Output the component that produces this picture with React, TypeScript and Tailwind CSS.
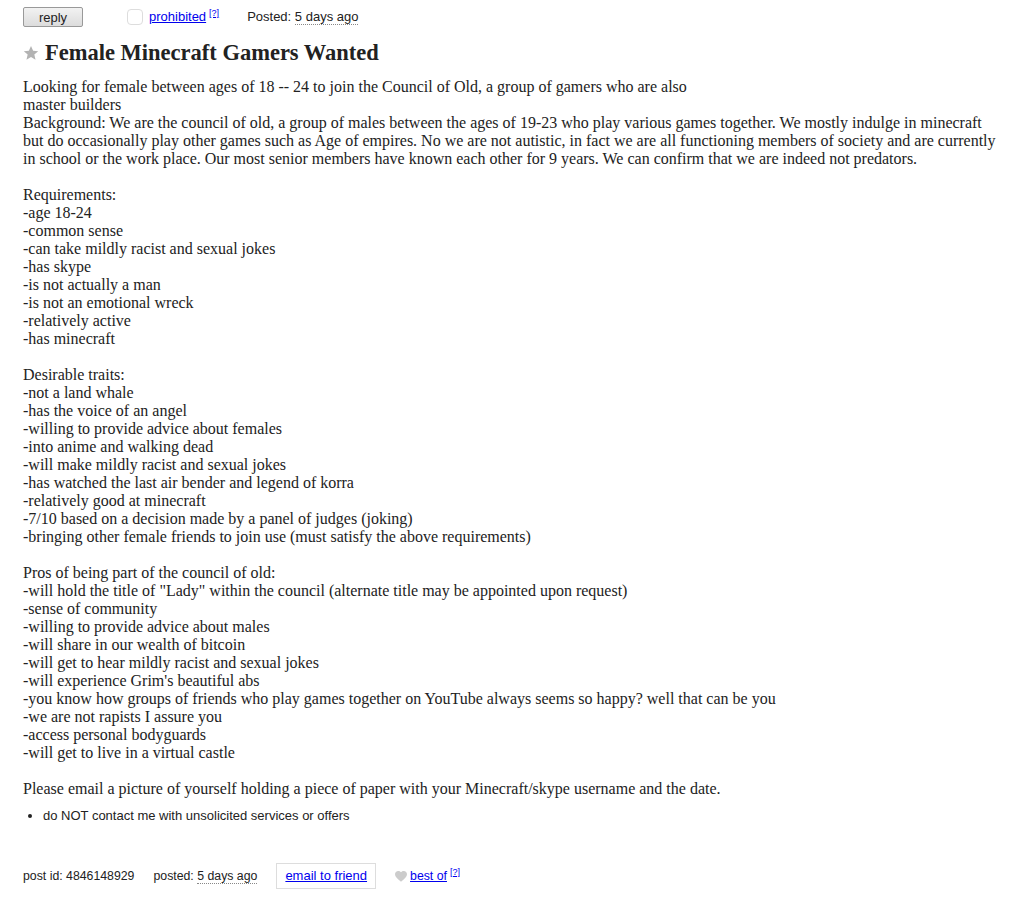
import React from 'react';

const body = `Looking for female between ages of 18 -- 24 to join the Council of Old, a group of gamers who are also
master builders
Background: We are the council of old, a group of males between the ages of 19-23 who play various games together. We mostly indulge in minecraft but do occasionally play other games such as Age of empires. No we are not autistic, in fact we are all functioning members of society and are currently in school or the work place. Our most senior members have known each other for 9 years. We can confirm that we are indeed not predators.

Requirements:
-age 18-24
-common sense
-can take mildly racist and sexual jokes
-has skype
-is not actually a man
-is not an emotional wreck
-relatively active
-has minecraft

Desirable traits:
-not a land whale
-has the voice of an angel
-willing to provide advice about females
-into anime and walking dead
-will make mildly racist and sexual jokes
-has watched the last air bender and legend of korra
-relatively good at minecraft
-7/10 based on a decision made by a panel of judges (joking)
-bringing other female friends to join use (must satisfy the above requirements)

Pros of being part of the council of old:
-will hold the title of "Lady" within the council (alternate title may be appointed upon request)
-sense of community
-willing to provide advice about males
-will share in our wealth of bitcoin
-will get to hear mildly racist and sexual jokes
-will experience Grim's beautiful abs
-you know how groups of friends who play games together on YouTube always seems so happy? well that can be you
-we are not rapists I assure you
-access personal bodyguards
-will get to live in a virtual castle

Please email a picture of yourself holding a piece of paper with your Minecraft/skype username and the date.`;

const sans = "font-['Liberation_Sans',Arial,sans-serif]";

const Star = () => (
  <svg width="16" height="16" viewBox="0 0 24 24" className="shrink-0">
    <path d="M12 1.5l3.2 7.1 7.6.7-5.8 5.1 1.8 7.6L12 18l-6.8 4 1.8-7.6L1.2 9.3l7.6-.7z" fill="#b3b3b3" />
  </svg>
);

const Heart = () => (
  <svg width="12" height="11" viewBox="0 0 24 22">
    <path d="M12 21.5L10.3 20C4.2 14.5 0 10.8 0 6.3 0 2.6 2.9 0 6.5 0c2.1 0 4.1 1 5.5 2.5C13.4 1 15.4 0 17.5 0 21.1 0 24 2.6 24 6.3c0 4.5-4.2 8.2-10.3 13.7z" fill="#ccc" />
  </svg>
);

export default function App() {
  return (
    <div className="min-h-screen bg-white text-[#222] px-[23px] pr-[10px]">
      <div className={`flex items-center h-[34px] text-[13px] ${sans}`}>
        <button className="w-[60px] h-[20px] border border-[#999] rounded-[2px] bg-gradient-to-b from-[#f2f2f2] to-[#dcdcdc] text-[13px] text-[#222]">
          reply
        </button>
        <span className="ml-[44px] w-[16px] h-[16px] rounded-[4px] border border-[#ddd] bg-white" />
        <a href="#" className="ml-[6px] text-[#0000ee] underline">prohibited</a>
        <sup className="ml-[3px] text-[9px] text-[#0000ee] underline -top-[4px]">[?]</sup>
        <span className="ml-[28px] text-[#222]">
          Posted: <span className="border-b border-dotted border-[#888]">5 days ago</span>
        </span>
      </div>
      <h1 className="flex items-center gap-[6px] mt-[3px] h-[32px] font-['Liberation_Serif','Times_New_Roman',serif] text-[22.5px] font-bold text-[#222]">
        <Star />
        Female Minecraft Gamers Wanted
      </h1>
      <div className="mt-[9px] whitespace-pre-line font-['Liberation_Serif','Times_New_Roman',serif] text-[16px] leading-[18px] text-[#222]">
        {body}
      </div>
      <ul className={`mt-[11px] ml-[20px] list-disc text-[13px] leading-[14px] ${sans}`}>
        <li>do NOT contact me with unsolicited services or offers</li>
      </ul>
      <div className={`mt-[40px] flex items-center text-[12.3px] ${sans}`}>
        <span>post id: 4846148929</span>
        <span className="ml-[19px]">
          posted: <span className="border-b border-dotted border-[#888]">5 days ago</span>
        </span>
        <span className="ml-[19px] border border-[#ddd] px-[8px] h-[26px] flex items-center text-[13px]">
          <a href="#" className="text-[#0000ee] underline">email to friend</a>
        </span>
        <span className="ml-[19px] flex items-center">
          <Heart />
        </span>
        <a href="#" className="ml-[3px] text-[#0000ee] underline">best of</a>
        <sup className="ml-[3px] text-[9px] text-[#0000ee] underline -top-[4px]">[?]</sup>
      </div>
    </div>
  );
}
